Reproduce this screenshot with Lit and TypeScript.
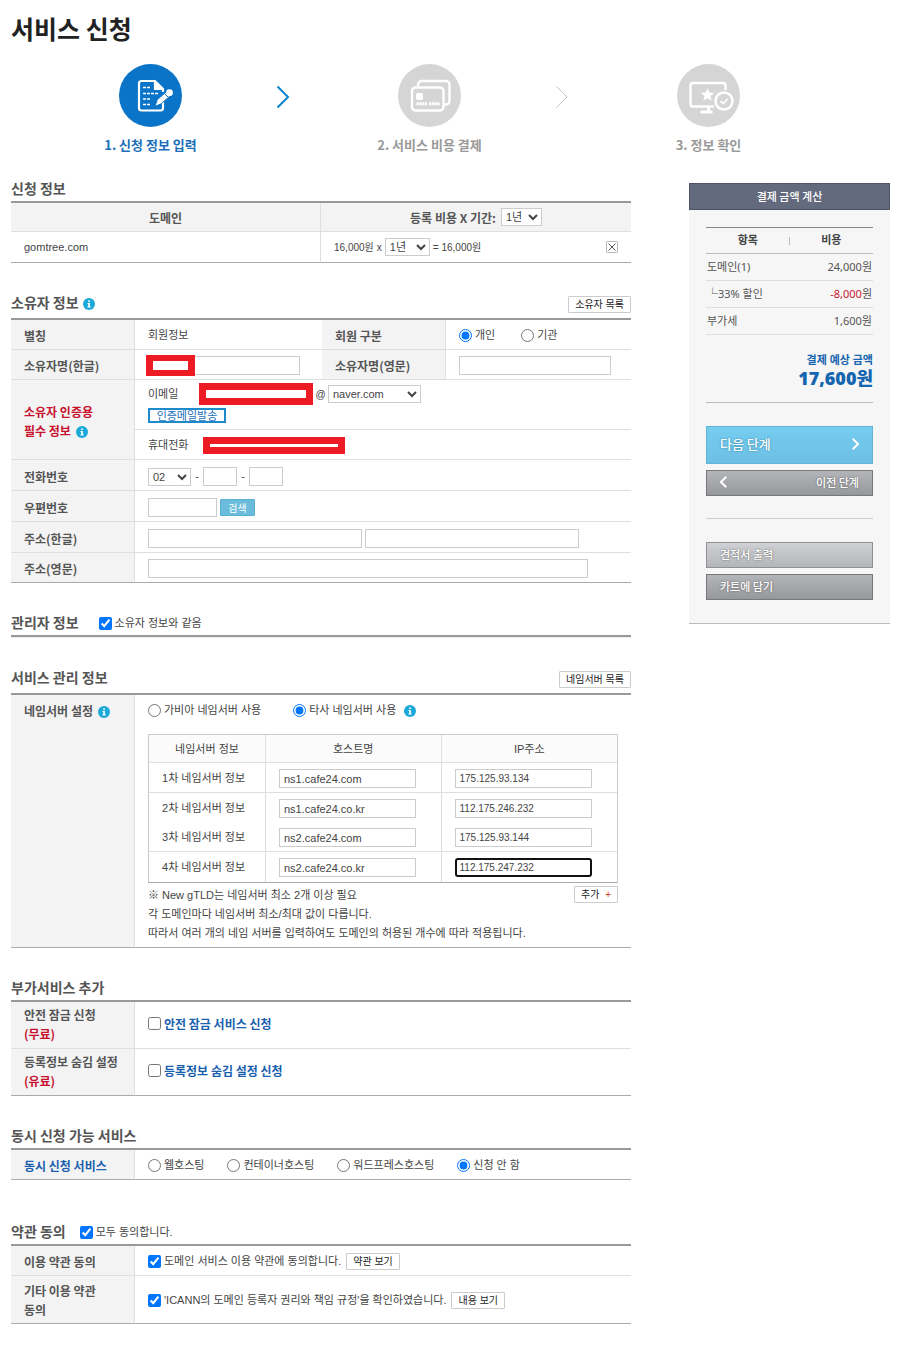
import { LitElement, html, css, svg } from "lit";
import { customElement, state } from "lit/decorators.js";

interface NameServer {
  order: number;
  host: string;
  ip: string;
}

const infoIcon = html`<svg class="info" viewBox="0 0 12 12" role="img" aria-label="도움말">
  <circle cx="6" cy="6" r="6" fill="#1aa9d8" />
  <rect x="5.2" y="2.4" width="1.7" height="1.6" fill="#fff" />
  <path d="M4.5 5h2.4v3.6h.8v.9H4.4v-.9h.8V5.9h-.7z" fill="#fff" />
</svg>`;

const chevron = (color: string, width: number) => svg`<svg class="chevron" viewBox="0 0 14 24" aria-hidden="true">
  <path d="M1.5 1.5 12 12 1.5 22.5" fill="none" stroke=${color} stroke-width=${width} />
</svg>`;

const applyIcon = html`<svg class="disc" viewBox="0 0 63 63" aria-hidden="true">
  <circle cx="31.5" cy="31.5" r="31.5" fill="#0a74c8" />
  <path d="M44 37v7a2.500 2.500 0 0 1-2.500 2.500H22.500A2.500 2.500 0 0 1 20 44V19.500A2.500 2.500 0 0 1 22.500 17H36l8 8v3" fill="none" stroke="#fff" stroke-width="2.200" />
  <path d="M35.500 17v8.500H44z" fill="#fff" stroke="#fff" stroke-width="1.200" />
  <path d="M24 23.500h7M24 29.500h15M24 35h7M24 40.500h7" stroke="#fff" stroke-width="1.500" stroke-dasharray="3 1" />
  <path d="M36 42.500l2.200-6.700 8.300-7.300 4 4-8.300 7.300z" fill="#fff" stroke="#0a74c8" stroke-width="1" />
  <circle cx="50.500" cy="28.700" r="3.400" fill="#fff" />
  <path d="M45.500 29.500l4.200 4.200" stroke="#0a74c8" stroke-width="1" />
</svg>`;

const cardIcon = html`<svg class="disc" viewBox="0 0 63 63" aria-hidden="true">
  <circle cx="31.5" cy="31.5" r="31.5" fill="#d5d5d5" />
  <path d="M20 22v-1.500a3.500 3.500 0 0 1 3.500-3.500H48a3.500 3.500 0 0 1 3.500 3.500V37a3.500 3.500 0 0 1-3.500 3.500h-2" fill="none" stroke="#fff" stroke-width="2.400" />
  <rect x="14" y="23.500" width="31.500" height="23" rx="3.500" fill="#d5d5d5" stroke="#fff" stroke-width="2.400" />
  <rect x="18" y="29" width="7" height="7" rx="1.500" fill="#fff" />
  <path d="M18.500 39.700h11M31 39.700h11" stroke="#fff" stroke-width="3" stroke-dasharray="2.200 .6" />
</svg>`;

const confirmIcon = html`<svg class="disc" viewBox="0 0 63 63" aria-hidden="true">
  <circle cx="31.5" cy="31.5" r="31.5" fill="#d5d5d5" />
  <path d="M37 42.500H16a2.500 2.500 0 0 1-2.500-2.500V21.500A2.500 2.500 0 0 1 16 19h30a2.500 2.500 0 0 1 2.500 2.500V26" fill="none" stroke="#fff" stroke-width="2.500" />
  <path d="M31.500 42v5M23.500 48h12" stroke="#fff" stroke-width="3" />
  <path d="M30.500 24l1.900 4.500 4.800.4-3.700 3.100 1.200 4.800-4.200-2.600-4.200 2.600 1.200-4.800-3.700-3.100 4.800-.4z" fill="#fff" />
  <circle cx="47" cy="37" r="8.500" fill="#d5d5d5" stroke="#fff" stroke-width="2.500" />
  <path d="M43.500 37l2.800 2.600 4.400-4.600" fill="none" stroke="#fff" stroke-width="1.800" />
</svg>`;

@customElement("app-root")
export class AppRoot extends LitElement {
  @state() private servers: NameServer[] = [
    { order: 1, host: "ns1.cafe24.com", ip: "175.125.93.134" },
    { order: 2, host: "ns1.cafe24.co.kr", ip: "112.175.246.232" },
    { order: 3, host: "ns2.cafe24.com", ip: "175.125.93.144" },
    { order: 4, host: "ns2.cafe24.co.kr", ip: "112.175.247.232" },
  ];

  static styles = css`
    :host {
      display: block;
      box-sizing: border-box;
      padding: 10px 10px 28px 11px;
      background: #fff;
      color: #444;
      font: 11px/19px "Liberation Sans", "Noto Sans CJK KR", sans-serif;
    }
    *, *::before { box-sizing: border-box; }
    h1 {
      margin: 0 0 16px;
      color: #222;
      font: 700 25px/36px "Noto Sans CJK KR", sans-serif;
      padding-bottom: 2px;
    }
    .steps {
      display: grid;
      grid-template-columns: 1fr auto 1fr auto 1fr;
      margin: 0 0 24px;
      padding: 0 56px 0 14px;
      list-style: none;
      font: 700 13px/20px "Noto Sans CJK KR", sans-serif;
      color: #999;
    }
    .step { display: flex; flex-direction: column; align-items: center; gap: 8px; }
    .step.current { color: #1a6fb8; }
    .disc { display: block; width: 63px; height: 63px; }
    .arrow { display: flex; align-items: center; height: 66px; padding-right: 14px; }
    .chevron { display: block; width: 14px; height: 24px; }
    .columns { display: flex; align-items: flex-start; gap: 58px; }
    main { flex: 1; min-width: 0; }
    section + section { margin-top: 30px; }
    section.terms { margin-top: 42px; }
    .head { display: flex; align-items: center; padding-bottom: 4px; }
    .head.with-button { padding-bottom: 5px; align-items: flex-end; }
    .head.with-button h2 { padding-bottom: 2px; }
    .head button { margin-left: auto; }
    h2 { margin: 0; color: #555; font: 700 14px/18px "Noto Sans CJK KR", sans-serif; }
    h2 .info { margin-left: 1px; }
    .head label { height: 18px; margin-left: 20px; padding-top: 2px; }
    .terms .head label { margin-left: 14px; }
    .info { width: 12px; height: 12px; vertical-align: -2px; margin-left: 2px; }
    .rule { height: 3px; border-top: 2px solid #999; border-bottom: 1px solid #ececec; }

    table { width: 100%; table-layout: fixed; border-spacing: 0; }
    .form { border-top: 2px solid #999; }
    .form > tbody > tr > *, .form > thead > tr > * { border-bottom: 1px solid #dedede; }
    .form > tbody > tr:last-child > * { border-bottom-color: #aaa; }
    th, td { padding: 6px 13px 4px; text-align: left; font-weight: 400; vertical-align: middle; }
    .form > tbody > tr > th, .form > thead > tr > th {
      background: #f3f3f3;
      border-right: 1px solid #dedede;
      color: #555;
      font: 700 12px/19px "Noto Sans CJK KR", sans-serif;
    }
    .label-col { width: 124px; }
    .tall > * { padding-top: 7px; }
    .line { display: flex; align-items: center; }
    label.pick { display: inline-flex; align-items: center; }
    .pick input { width: 13px; height: 13px; margin: 0 3px 0 0; }
    .text {
      height: 19px;
      border: 1px solid #ccc;
      border-radius: 0;
      padding: 0 4px;
      background: #fff;
      color: #444;
      font: 11px/17px "Liberation Sans", "Noto Sans CJK KR", sans-serif;
      outline: none;
    }
    select {
      height: 18px;
      border: 1px solid #ccc;
      border-radius: 0;
      padding: 0;
      background: #fff;
      color: #444;
      font: 11px/16px "Liberation Sans", "Noto Sans CJK KR", sans-serif;
    }
    button { margin: 0; cursor: pointer; }
    .small {
      height: 17px;
      padding: 0 6px;
      border: 1px solid #ccc;
      border-radius: 1px;
      background: #fff;
      color: #222;
      font: 10px/15px "Liberation Sans", "Noto Sans CJK KR", sans-serif;
      white-space: nowrap;
    }

    .domains > thead > tr > th, .domains > tbody > tr > td { text-align: center; }
    .domains > thead > tr > th { padding-top: 5px; padding-bottom: 5px; }
    .domains > thead > tr > th:last-child { border-right: 0; }
    .domains > thead > tr > th select { margin-left: 2px; }
    .domains > tbody > tr > td { padding: 6px 13px; text-align: left; }
    .domains > tbody > tr > td:first-child { border-right: 1px solid #dedede; }
    .domains .line { height: 18px; }
    .head-line { display: flex; align-items: center; justify-content: center; gap: 3px; height: 18px; }
    .domain-col { width: 50%; }
    .price { display: flex; align-items: center; gap: 3px; height: 18px; font-size: 10px; }
    .w41 { width: 41px; }
    .w45 { width: 45px; }
    .remove {
      display: flex;
      width: 12px;
      height: 12px;
      margin-left: auto;
      padding: 1px;
      border: 1px solid #bbb;
      border-radius: 1px;
      background: #fff;
    }
    .remove svg { width: 8px; height: 8px; }

    .kind { width: 124px; }
    .value { width: 187px; }
    .member { gap: 26px; height: 19px; }
    .masked { position: relative; display: block; height: 19px; }
    .w152 { display: block; width: 152px; }
    .masked::before {
      content: "";
      position: absolute;
      left: -2px;
      top: -1px;
      width: 49px;
      height: 21px;
      border: solid #ed1c24;
      border-width: 6px 7px;
      background: #fff;
    }
    .owner > tbody > tr > .email { padding: 3px 13px 6px; }
    .email .line { height: 22px; margin-bottom: 3px; }
    .email .line .caption { width: 51px; }
    .redacted { border: 7px solid #ed1c24; border-radius: 0; padding: 0; background: #fff; outline: none; }
    .mail-id { width: 114px; height: 22px; }
    .mobile { width: 142px; height: 17px; }
    .at { width: 15px; text-align: center; font-size: 10px; }
    .naver { width: 93px; }
    .send {
      display: block;
      width: 78px;
      height: 15px;
      padding: 0;
      border: 2px solid #1f8ac9;
      border-radius: 0;
      background: #fff;
      color: #1a6fb8;
      font: 11px/9px "Noto Sans CJK KR", sans-serif;
      overflow: hidden;
    }
    .owner > tbody > tr > .required, .red { color: #c8102e; font-weight: 700; }
    .phone .caption { width: 55px; }
    .phone { height: 19px; }
    .dash { width: 12px; text-align: center; }
    .tel .w43 { width: 43px; }
    .w34 { width: 34px; }
    .w69 { width: 69px; }
    .zip { gap: 3px; }
    .search {
      width: 35px;
      height: 17px;
      padding: 0;
      border: 1px solid #58b1d3;
      border-radius: 1px;
      background: #6bbbdc;
      color: #fff;
      font: 10px/15px "Noto Sans CJK KR", sans-serif;
    }
    .address { gap: 3px; }
    .address .text { width: 214px; }
    .address .wide { width: 440px; }

    .service > tbody > tr > th { vertical-align: top; }
    .choose { height: 19px; gap: 32px; }
    .choose .info { margin-left: 8px; }
    .servers {
      margin-top: 14px;
      border: 1px solid #ccc;
      border-bottom-color: #aaa;
    }
    .servers th, .servers td { border-right: 1px solid #dedede; border-bottom: 1px solid #dedede; }
    .servers th:last-child, .servers td:last-child { border-right: 0; }
    .servers thead th { padding: 5px 0 3px; background: #fbfbfb; text-align: center; }
    .servers .open th, .servers .open td { border-bottom: 0; }
    .servers tbody tr:last-child > * { padding: 6px 13px 5px; border-bottom: 0; }
    .servers .text { display: block; width: 137px; }
    .servers .ip { font-size: 10px; }
    .servers .active { border: 2px solid #111; border-radius: 3px; padding: 0 3px; }
    .order-col { width: 117px; }
    .notes { display: flex; justify-content: space-between; align-items: flex-start; margin-top: 3px; }
    .notes p { margin: 0; }
    .plus { margin-left: 3px; color: #d9451c; }

    .extras > tbody > tr > th { padding: 3px 13px 5px; }
    .extras > tbody > tr > td { padding: 5px 13px; }
    .extras .red { display: block; }
    .blue { color: #1a5fae; font: 700 12px/19px "Noto Sans CJK KR", sans-serif; }
    .form > tbody > tr > th.blue { color: #1a5fae; }
    .hosting { gap: 23px; height: 19px; }
    .agree { gap: 5px; }
    .terms .form > tbody > tr:last-child > * { padding-top: 5px; }

    aside { width: 201px; margin-top: 4px; background: #f6f6f6; border-bottom: 1px solid #bbb; }
    aside h2 {
      border: 1px solid #4f5363;
      background: #646a7d;
      color: #fff;
      text-align: center;
      font: 500 11px/25px "Noto Sans CJK KR", sans-serif;
    }
    .calc { padding: 17px 17px 23px; }
    .sum { border-top: 1px solid #888; font: 11px/16px "Noto Sans", "Noto Sans CJK KR", sans-serif; color: #555; }
    .sum th, .sum td { padding: 5px 1px; border-bottom: 1px solid #ddd; }
    .sum thead th { padding: 4px 0 5px; text-align: center; font-weight: 700; border-bottom-color: #bbb; color: #444; }
    .sum thead th:first-child { background: linear-gradient(#bbb, #bbb) no-repeat right center / 1px 8px; }
    .sum td { text-align: right; }
    .sum .minus { color: #c8202e; }
    .total { margin: 16px 0 0; padding-bottom: 14px; border-bottom: 1px solid #bbb; text-align: right; color: #1565b0; font: 700 11px/18px "Noto Sans", "Noto Sans CJK KR", sans-serif; }
    .total strong { display: block; font-size: 18px; line-height: 19px; }
    .actions { display: grid; gap: 6px; padding: 23px 0 22px; border-bottom: 1px solid #ccc; }
    .actions.last { padding: 23px 0 0; border-bottom: 0; }
    .action {
      display: flex;
      align-items: center;
      justify-content: space-between;
      height: 26px;
      padding: 0 13px 2px;
      border: 1px solid #77787c;
      border-radius: 0;
      background: linear-gradient(#b4b5b9, #97989b);
      color: #fff;
      font: 500 11px/16px "Noto Sans CJK KR", sans-serif;
      text-shadow: 0 0 2px #555;
    }
    .action .chevron { width: 7px; height: 12px; }
    .action.next { height: 38px; border-color: #5fb4d8; background: linear-gradient(#75cdf0, #6cbfe2); font-size: 13px; text-shadow: 0 0 2px #2d7799; }
    .action.prev { flex-direction: row-reverse; }
    .action.prev .chevron { transform: scaleX(-1); }
    .action.light { border-color: #909195; background: linear-gradient(#d0d1d5, #b4b5b9); }
  `;

  private addServer() {
    this.servers = [...this.servers, { order: this.servers.length + 1, host: "", ip: "" }];
  }

  private renderServer(s: NameServer) {
    return html`<tr class=${s.order === 2 ? "open" : ""}>
      <th scope="row">${s.order}차 네임서버 정보</th>
      <td><input class="text" type="text" aria-label="${s.order}차 호스트명" .value=${s.host} /></td>
      <td><input class="text ip ${s.order === 4 ? "active" : ""}" type="text" aria-label="${s.order}차 IP주소" .value=${s.ip} /></td>
    </tr>`;
  }

  render() {
    return html`
      <h1>서비스 신청</h1>
      <ol class="steps">
        <li class="step current">${applyIcon}<span>1. 신청 정보 입력</span></li>
        <li class="arrow" aria-hidden="true">${chevron("#0a84cc", 2)}</li>
        <li class="step">${cardIcon}<span>2. 서비스 비용 결제</span></li>
        <li class="arrow" aria-hidden="true">${chevron("#c4c4c4", 1)}</li>
        <li class="step">${confirmIcon}<span>3. 정보 확인</span></li>
      </ol>
      <div class="columns">
        <main>
          <section>
            <div class="head"><h2>신청 정보</h2></div>
            <table class="form domains">
              <colgroup><col class="domain-col" /><col /></colgroup>
              <thead>
                <tr>
                  <th scope="col"><div class="head-line">도메인</div></th>
                  <th scope="col">
                    <div class="head-line">
                      <label for="period">등록 비용 X 기간:</label>
                      <select id="period" class="w41"><option>1년</option><option>2년</option></select>
                    </div>
                  </th>
                </tr>
              </thead>
              <tbody>
                <tr>
                  <td><div class="line">gomtree.com</div></td>
                  <td>
                    <div class="price">
                      <span>16,000원</span><span>x</span>
                      <select class="w45" aria-label="등록 기간"><option>1년</option><option>2년</option></select>
                      <span>= 16,000원</span>
                      <button class="remove" type="button" aria-label="삭제">
                        <svg viewBox="0 0 8 8"><path d="M.5.5l7 7M7.500.5l-7 7" stroke="#555" stroke-width="1" /></svg>
                      </button>
                    </div>
                  </td>
                </tr>
              </tbody>
            </table>
          </section>

          <section>
            <div class="head with-button">
              <h2>소유자 정보 ${infoIcon}</h2>
              <button class="small" type="button">소유자 목록</button>
            </div>
            <table class="form owner">
              <colgroup><col class="label-col" /><col class="value" /><col class="kind" /><col /></colgroup>
              <tbody>
                <tr>
                  <th scope="row">별칭</th>
                  <td>회원정보</td>
                  <th scope="row">회원 구분</th>
                  <td>
                    <div class="line member">
                      <label class="pick"><input type="radio" name="member" checked />개인</label>
                      <label class="pick"><input type="radio" name="member" />기관</label>
                    </div>
                  </td>
                </tr>
                <tr>
                  <th scope="row"><label for="name-ko">소유자명(한글)</label></th>
                  <td><span class="masked"><input id="name-ko" class="text w152" type="text" /></span></td>
                  <th scope="row"><label for="name-en">소유자명(영문)</label></th>
                  <td><input id="name-en" class="text w152" type="text" /></td>
                </tr>
                <tr>
                  <th scope="row" rowspan="2" class="required">소유자 인증용<br />필수 정보 ${infoIcon}</th>
                  <td colspan="3" class="email">
                    <div class="line">
                      <label class="caption" for="mail">이메일</label>
                      <input id="mail" class="redacted mail-id" type="text" />
                      <span class="at">@</span>
                      <select class="naver" aria-label="이메일 도메인"><option>naver.com</option></select>
                    </div>
                    <button class="send" type="button">인증메일발송</button>
                  </td>
                </tr>
                <tr>
                  <td colspan="3">
                    <div class="line phone">
                      <label class="caption" for="mobile">휴대전화</label>
                      <input id="mobile" class="redacted mobile" type="text" />
                    </div>
                  </td>
                </tr>
                <tr class="tall">
                  <th scope="row"><label for="area">전화번호</label></th>
                  <td colspan="3">
                    <div class="line tel">
                      <select id="area" class="w43"><option>02</option><option>031</option></select>
                      <span class="dash">-</span><input class="text w34" type="text" aria-label="전화번호 앞자리" />
                      <span class="dash">-</span><input class="text w34" type="text" aria-label="전화번호 뒷자리" />
                    </div>
                  </td>
                </tr>
                <tr class="tall">
                  <th scope="row"><label for="zip">우편번호</label></th>
                  <td colspan="3">
                    <div class="line zip"><input id="zip" class="text w69" type="text" /><button class="search" type="button">검색</button></div>
                  </td>
                </tr>
                <tr class="tall">
                  <th scope="row"><label for="addr-ko">주소(한글)</label></th>
                  <td colspan="3">
                    <div class="line address"><input id="addr-ko" class="text" type="text" /><input class="text" type="text" aria-label="상세 주소" /></div>
                  </td>
                </tr>
                <tr>
                  <th scope="row"><label for="addr-en">주소(영문)</label></th>
                  <td colspan="3"><div class="line address"><input id="addr-en" class="text wide" type="text" /></div></td>
                </tr>
              </tbody>
            </table>
          </section>

          <section>
            <div class="head">
              <h2>관리자 정보</h2>
              <label class="pick"><input type="checkbox" checked />소유자 정보와 같음</label>
            </div>
            <div class="rule"></div>
          </section>

          <section>
            <div class="head with-button">
              <h2>서비스 관리 정보</h2>
              <button class="small" type="button">네임서버 목록</button>
            </div>
            <table class="form service">
              <colgroup><col class="label-col" /><col /></colgroup>
              <tbody>
                <tr>
                  <th scope="row">네임서버 설정 ${infoIcon}</th>
                  <td>
                    <div class="line choose">
                      <label class="pick"><input type="radio" name="ns" />가비아 네임서버 사용</label>
                      <label class="pick"><input type="radio" name="ns" checked />타사 네임서버 사용 ${infoIcon}</label>
                    </div>
                    <table class="servers">
                      <colgroup><col class="order-col" /><col /><col /></colgroup>
                      <thead>
                        <tr><th scope="col">네임서버 정보</th><th scope="col">호스트명</th><th scope="col">IP주소</th></tr>
                      </thead>
                      <tbody>${this.servers.map((s) => this.renderServer(s))}</tbody>
                    </table>
                    <div class="notes">
                      <p>※ New gTLD는 네임서버 최소 2개 이상 필요<br />각 도메인마다 네임서버 최소/최대 값이 다릅니다.<br />따라서 여러 개의 네임 서버를 입력하여도 도메인의 허용된 개수에 따라 적용됩니다.</p>
                      <button class="small" type="button" @click=${this.addServer}>추가 <span class="plus">+</span></button>
                    </div>
                  </td>
                </tr>
              </tbody>
            </table>
          </section>

          <section>
            <div class="head"><h2>부가서비스 추가</h2></div>
            <table class="form extras">
              <colgroup><col class="label-col" /><col /></colgroup>
              <tbody>
                <tr>
                  <th scope="row">안전 잠금 신청<span class="red">(무료)</span></th>
                  <td><label class="pick blue"><input type="checkbox" />안전 잠금 서비스 신청</label></td>
                </tr>
                <tr>
                  <th scope="row">등록정보 숨김 설정<span class="red">(유료)</span></th>
                  <td><label class="pick blue"><input type="checkbox" />등록정보 숨김 설정 신청</label></td>
                </tr>
              </tbody>
            </table>
          </section>

          <section>
            <div class="head"><h2>동시 신청 가능 서비스</h2></div>
            <table class="form">
              <colgroup><col class="label-col" /><col /></colgroup>
              <tbody>
                <tr>
                  <th scope="row" class="blue">동시 신청 서비스</th>
                  <td>
                    <div class="line hosting">
                      <label class="pick"><input type="radio" name="hosting" />웹호스팅</label>
                      <label class="pick"><input type="radio" name="hosting" />컨테이너호스팅</label>
                      <label class="pick"><input type="radio" name="hosting" />워드프레스호스팅</label>
                      <label class="pick"><input type="radio" name="hosting" checked />신청 안 함</label>
                    </div>
                  </td>
                </tr>
              </tbody>
            </table>
          </section>

          <section class="terms">
            <div class="head">
              <h2>약관 동의</h2>
              <label class="pick"><input type="checkbox" checked />모두 동의합니다.</label>
            </div>
            <table class="form">
              <colgroup><col class="label-col" /><col /></colgroup>
              <tbody>
                <tr>
                  <th scope="row">이용 약관 동의</th>
                  <td>
                    <div class="line agree">
                      <label class="pick"><input type="checkbox" checked />도메인 서비스 이용 약관에 동의합니다.</label>
                      <button class="small" type="button">약관 보기</button>
                    </div>
                  </td>
                </tr>
                <tr>
                  <th scope="row">기타 이용 약관<br />동의</th>
                  <td>
                    <div class="line agree">
                      <label class="pick"><input type="checkbox" checked />'ICANN의 도메인 등록자 권리와 책임 규정'을 확인하였습니다.</label>
                      <button class="small" type="button">내용 보기</button>
                    </div>
                  </td>
                </tr>
              </tbody>
            </table>
          </section>
        </main>

        <aside>
          <h2>결제 금액 계산</h2>
          <div class="calc">
            <table class="sum">
              <thead><tr><th scope="col">항목</th><th scope="col">비용</th></tr></thead>
              <tbody>
                <tr><th scope="row">도메인(1)</th><td>24,000원</td></tr>
                <tr><th scope="row">└33% 할인</th><td><span class="minus">-8,000</span>원</td></tr>
                <tr><th scope="row">부가세</th><td>1,600원</td></tr>
              </tbody>
            </table>
            <p class="total">결제 예상 금액<strong>17,600원</strong></p>
            <div class="actions">
              <button class="action next" type="button">다음 단계 ${chevron("#fff", 4)}</button>
              <button class="action prev" type="button">이전 단계 ${chevron("#fff", 4)}</button>
            </div>
            <div class="actions last">
              <button class="action light" type="button">견적서 출력</button>
              <button class="action" type="button">카트에 담기</button>
            </div>
          </div>
        </aside>
      </div>
    `;
  }
}
